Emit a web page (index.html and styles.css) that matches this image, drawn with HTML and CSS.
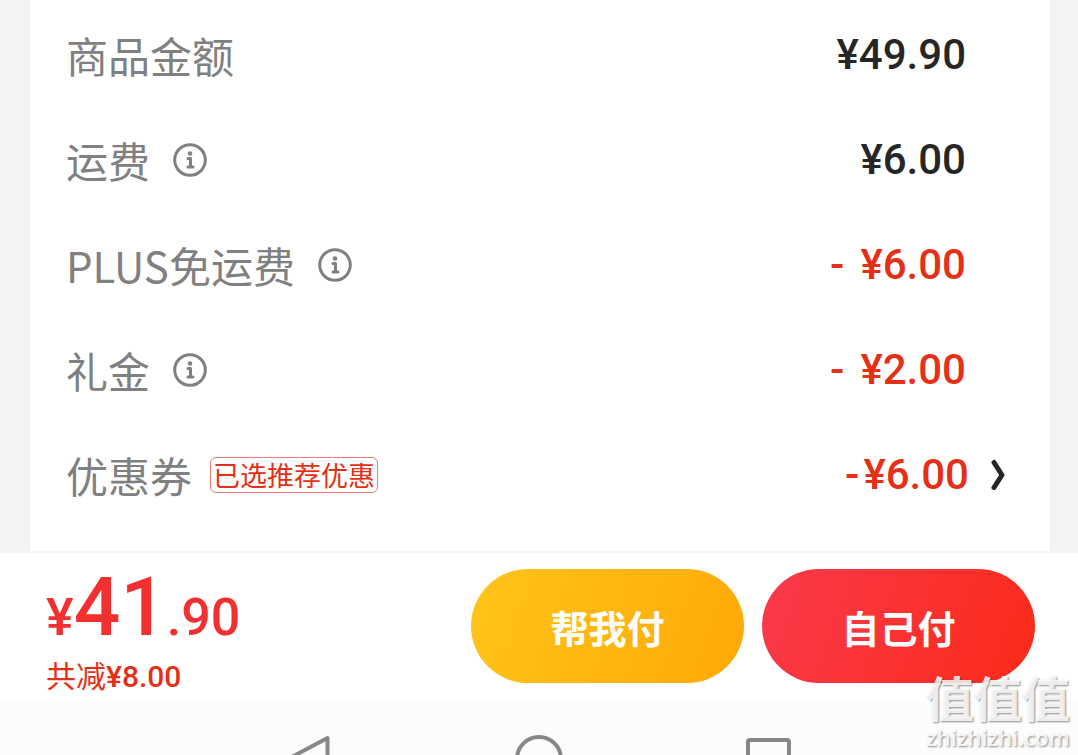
FILE: index.html
```html
<!DOCTYPE html>
<html lang="zh-CN">
<head>
  <meta charset="UTF-8">
  <meta name="viewport" content="width=device-width, initial-scale=1">
  <title>确认订单</title>
  <link rel="stylesheet" href="styles.css">
</head>
<body>
  <main class="card">
    <div class="row">
      <span class="label">商品金额</span>
      <span class="price">¥49.90</span>
    </div>
    <div class="row">
      <span class="label">运费</span>
      <button class="info" aria-label="运费说明">
        <svg width="34" height="34" viewBox="0 0 34 34"><circle cx="17" cy="17" r="15.3"/><circle class="dot" cx="17" cy="10.5" r="2.3"/><path d="M15 15.500h2.500V24M15 24h5"/></svg>
      </button>
      <span class="price">¥6.00</span>
    </div>
    <div class="row">
      <span class="label">PLUS免运费</span>
      <button class="info" aria-label="PLUS免运费说明">
        <svg width="34" height="34" viewBox="0 0 34 34"><circle cx="17" cy="17" r="15.3"/><circle class="dot" cx="17" cy="10.5" r="2.3"/><path d="M15 15.500h2.500V24M15 24h5"/></svg>
      </button>
      <span class="price minus"><span class="sign">-</span>¥6.00</span>
    </div>
    <div class="row">
      <span class="label">礼金</span>
      <button class="info" aria-label="礼金说明">
        <svg width="34" height="34" viewBox="0 0 34 34"><circle cx="17" cy="17" r="15.3"/><circle class="dot" cx="17" cy="10.5" r="2.3"/><path d="M15 15.500h2.500V24M15 24h5"/></svg>
      </button>
      <span class="price minus"><span class="sign">-</span>¥2.00</span>
    </div>
    <div class="row coupon">
      <span class="label">优惠券</span>
      <span class="tag">已选推荐优惠</span>
      <span class="price minus"><span class="sign">-</span>¥6.00</span>
      <button class="more" aria-label="选择优惠券">
        <svg width="16" height="32" viewBox="0 0 16 32"><path d="M4 3.500L12 16 4 28.500"/></svg>
      </button>
    </div>
  </main>

  <footer class="paybar">
    <div class="total">
      <div class="sum">¥<span class="big">41</span>.90</div>
      <div class="saved">共减<span class="saved-num">¥8.00</span></div>
    </div>
    <button class="pay pay-other">帮我付</button>
    <button class="pay pay-self">自己付</button>
  </footer>

  <nav class="sysnav">
    <svg width="48" height="48" viewBox="0 0 48 48"><path d="M41.500 3L2 24 41.500 45z"/></svg>
    <svg width="48" height="48" viewBox="0 0 48 48"><circle cx="24" cy="24" r="22"/></svg>
    <svg width="48" height="48" viewBox="0 0 48 48"><rect x="4" y="5" width="41" height="41" rx="2"/></svg>
  </nav>

  <div class="watermark">
    <div class="wm-name">值值值</div>
    <div class="wm-site">zhizhizhi.com</div>
  </div>
</body>
</html>
```
FILE: styles.css
```css
* {
  box-sizing: border-box;
}
body {
  margin: 0;
  height: 100vh;
  overflow: hidden;
  position: relative;
  display: flex;
  flex-direction: column;
  background: #f4f4f4;
  font-family: Roboto, "Noto Sans CJK SC", sans-serif;
}
button {
  border: 0;
  padding: 0;
  background: none;
  cursor: pointer;
}
svg {
  display: block;
  fill: none;
  stroke-linecap: round;
  stroke-linejoin: round;
}

/* price details */
.card {
  margin: 0 28px 2px 30px;
  padding: 2px 84px 24px 36px;
  background: #fff;
}
.row {
  display: flex;
  align-items: center;
  height: 105px;
}
.label {
  font-family: "Noto Sans CJK SC", sans-serif;
  font-size: 42px;
  line-height: 60px;
  color: #808080;
}
.info {
  margin-left: 23px;
}
.info svg {
  stroke: #808080;
  stroke-width: 3;
}
.info .dot {
  fill: #808080;
  stroke: none;
}
.price {
  margin-left: auto;
  font-size: 42px;
  line-height: 48px;
  font-weight: 500;
  color: #262626;
}
.minus {
  color: #e52f16;
}
.sign {
  margin-right: 16px;
}
.coupon {
  margin-right: -40px;
}
.coupon .sign {
  margin-right: 4px;
}
.tag {
  margin-left: 18px;
  padding: 0 2px;
  border: 1px solid #ee7c6c;
  border-radius: 6px;
  font-family: "Noto Sans CJK SC", sans-serif;
  font-size: 27px;
  line-height: 34px;
  color: #e52f16;
}
.more {
  margin-left: 21px;
}
.more svg {
  stroke: #262626;
  stroke-width: 5;
}

/* pay bar */
.paybar {
  display: flex;
  align-items: center;
  gap: 18px;
  height: 148px;
  padding: 0 43px 2px 46px;
  background: #fff;
}
.total {
  flex: 1;
  padding-top: 4px;
}
.sum {
  font-size: 52px;
  line-height: 84px;
  font-weight: 500;
  color: #f2302f;
}
.big {
  font-size: 82px;
}
.saved {
  font-family: "Noto Sans CJK SC", sans-serif;
  font-size: 30px;
  line-height: 28px;
  color: #e52f16;
}
.saved-num {
  font-family: Roboto, sans-serif;
  font-weight: 500;
}
.pay {
  width: 273px;
  height: 114px;
  border-radius: 57px;
  font-family: "Noto Sans CJK SC", sans-serif;
  font-size: 38px;
  font-weight: 700;
  color: #fff;
}
.pay-other {
  background: linear-gradient(110deg, #ffc51a, #ffa808);
}
.pay-self {
  background: linear-gradient(110deg, #f93a4c, #fc2a18);
}

/* system keys */
.sysnav {
  flex: 1;
  display: flex;
  justify-content: center;
  gap: 181px;
  padding-top: 34px;
  overflow: hidden;
  background: #fcfcfc;
}
.sysnav svg {
  flex: none;
  stroke: #878787;
  stroke-width: 4;
}

.watermark {
  position: absolute;
  right: 8px;
  bottom: 4px;
  text-align: center;
  color: rgba(255, 255, 255, 0.85);
  text-shadow: 1px 1px 2px rgba(0, 0, 0, 0.45);
  pointer-events: none;
}
.wm-name {
  font-family: "Noto Sans CJK SC", sans-serif;
  font-size: 48px;
  line-height: 54px;
  font-weight: 700;
}
.wm-site {
  font-family: "Open Sans", sans-serif;
  font-size: 22px;
  line-height: 28px;
  font-weight: 600;
}
```
